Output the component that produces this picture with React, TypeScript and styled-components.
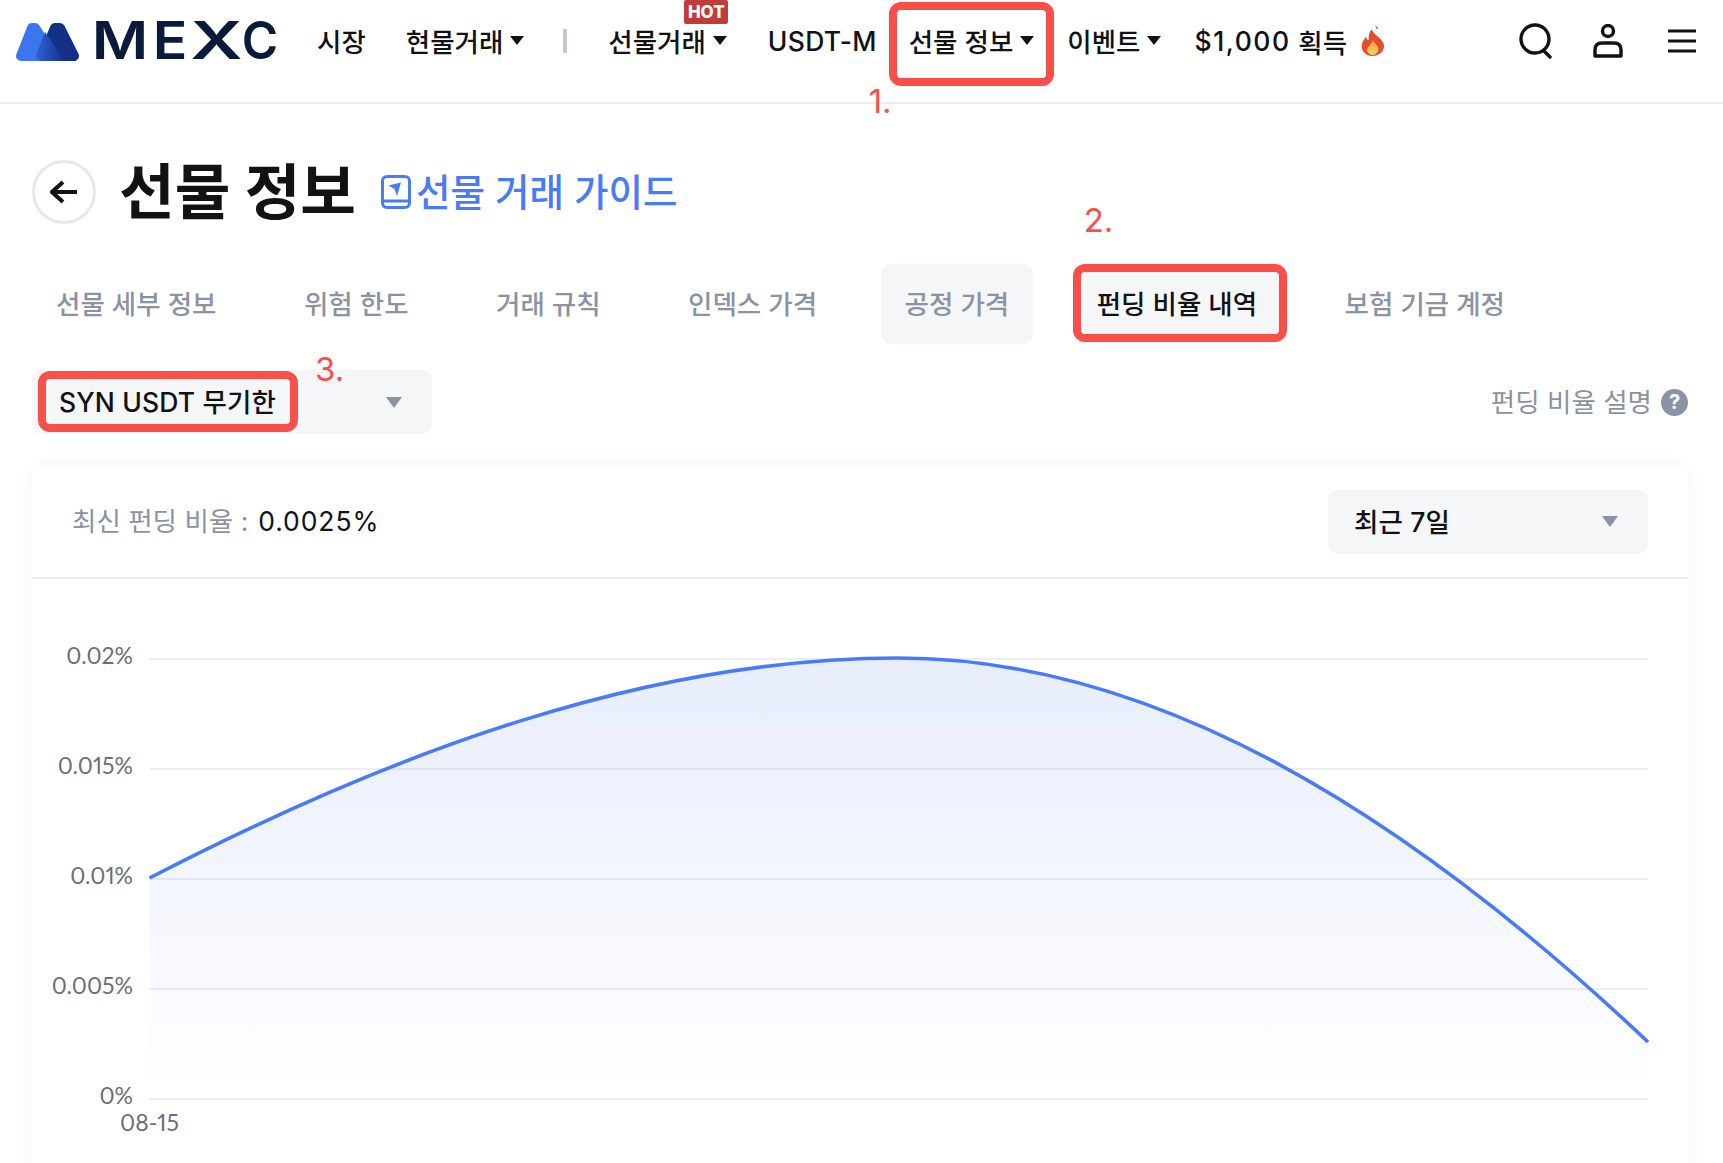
import styled, { createGlobalStyle } from 'styled-components';

const GlobalStyle = createGlobalStyle`
  html, body {
    margin: 0;
    padding: 0;
    background: #fff;
    overflow: hidden;
  }
  * { box-sizing: border-box; }
  body {
    font-family: Inter, "Noto Sans CJK KR", sans-serif;
    color: #111214;
  }
`;

const RED = '#f94f4b';
const BLUE = '#4a7bf7';
const GREY = '#8a92a3';

const Page = styled.div`
  width: 1723px;
  height: 1163px;
  overflow: hidden;
`;

const Header = styled.header`
  height: 104px;
  padding: 0 27px 20px 16px;
  border-bottom: 2px solid #ecedf1;
  display: flex;
  align-items: center;
`;

const Logo = styled.div`
  display: flex;
  align-items: center;
  width: 301px;
  gap: 18px;
`;

const Wordmark = styled.div`
  display: flex;
  font-size: 52px;
  line-height: 1;
  font-weight: 600;
  color: #0a1a3a;
`;

const Glyph = styled.span<{ $w: number; $ml: number; $sx: number }>`
  width: ${p => p.$w}px;
  margin-left: ${p => p.$ml}px;
  display: flex;
  justify-content: center;
  transform: scaleX(${p => p.$sx});
`;

const Nav = styled.nav`
  display: flex;
  align-items: center;
  height: 100%;
`;

const NavItem = styled.div<{ $ml: number }>`
  position: relative;
  display: flex;
  align-items: center;
  height: 100%;
  padding-bottom: 2px;
  margin-left: ${p => p.$ml}px;
  font-size: 26.5px;
  font-weight: 500;
  white-space: nowrap;
`;

const LatinItem = styled(NavItem)`
  padding-bottom: 0;
  letter-spacing: 0.3px;
`;

const Money = styled.span`
  letter-spacing: 1.6px;
`;

const Caret = styled.i`
  margin-left: 7px;
  width: 0;
  height: 0;
  border-left: 7px solid transparent;
  border-right: 7px solid transparent;
  border-top: 9px solid #111214;
`;

const Separator = styled.div`
  width: 4px;
  height: 24px;
  margin-left: 39px;
  background: #c2c7d3;
`;

const HotBadge = styled.span`
  position: absolute;
  top: 0;
  left: 76px;
  width: 44px;
  height: 24px;
  display: flex;
  align-items: center;
  justify-content: center;
  background: #c23a3a;
  border-radius: 2px;
  color: #fff;
  font-size: 17px;
  font-weight: 800;
`;

const Actions = styled.div`
  margin-left: auto;
  display: flex;
  align-items: center;
  gap: 40px;
`;

const Highlight = styled.div<{ $inset: string; $width?: number }>`
  position: absolute;
  inset: ${p => p.$inset};
  ${p => (p.$width ? `width: ${p.$width}px;` : '')}
  border: 8px solid ${RED};
  border-radius: 12px;
  pointer-events: none;
`;

const Step = styled.span<{ $left: number; $top: number }>`
  position: absolute;
  left: ${p => p.$left}px;
  top: ${p => p.$top}px;
  font-size: 33px;
  line-height: 1;
  font-weight: 400;
  color: ${RED};
`;

const Main = styled.main`
  padding: 56px 35px 0 32px;
`;

const TitleRow = styled.div`
  display: flex;
  align-items: center;
  height: 64px;
`;

const BackButton = styled.div`
  width: 64px;
  height: 64px;
  border: 3.5px solid #e8e8e8;
  border-radius: 50%;
  display: flex;
  align-items: center;
  justify-content: center;
`;

const Title = styled.h1`
  margin: 0 0 0 23px;
  font-size: 60.5px;
  line-height: 64px;
  font-weight: 700;
`;

const GuideLink = styled.a`
  margin-left: 25px;
  display: flex;
  align-items: center;
  gap: 5px;
  font-size: 37.5px;
  font-weight: 500;
  color: ${BLUE};
`;

const Lifted = styled.span<{ $by: number }>`
  padding-bottom: ${p => p.$by}px;
`;

const Tabs = styled.div`
  margin-top: 40px;
  display: flex;
  gap: 39.5px;
`;

const Tab = styled.div<{ $filled?: boolean; $active?: boolean }>`
  position: relative;
  height: 80px;
  padding: 0 24px 4px;
  display: flex;
  align-items: center;
  border-radius: 10px;
  font-size: 26.5px;
  font-weight: 500;
  white-space: nowrap;
  background: ${p => (p.$filled ? '#f5f6f8' : 'transparent')};
  color: ${p => (p.$active ? '#111214' : GREY)};
`;

const FilterRow = styled.div`
  margin-top: 26px;
  display: flex;
  align-items: center;
  justify-content: space-between;
`;

const Select = styled.div<{ $width: number; $pad: number }>`
  position: relative;
  width: ${p => p.$width}px;
  height: 64px;
  padding: 0 30px 3px ${p => p.$pad}px;
  display: flex;
  align-items: center;
  justify-content: space-between;
  background: #f5f6f8;
  border-radius: 10px;
  font-size: 26.5px;
  font-weight: 500;
  letter-spacing: 0.15px;
`;

const SelectCaret = styled.i`
  margin-top: 3px;
  width: 0;
  height: 0;
  border-left: 8px solid transparent;
  border-right: 8px solid transparent;
  border-top: 11px solid ${GREY};
`;

const Help = styled.div`
  display: flex;
  align-items: center;
  gap: 9px;
  font-size: 26.5px;
  font-weight: 400;
  color: ${GREY};
`;

const HelpIcon = styled.span`
  width: 27px;
  height: 27px;
  border-radius: 50%;
  background: ${GREY};
  color: #fff;
  font-size: 20px;
  font-weight: 700;
  display: flex;
  align-items: center;
  justify-content: center;
`;

const Card = styled.section`
  margin-top: 32px;
  height: 720px;
  background: #fff;
  border-radius: 10px;
  box-shadow: 0 0 18px rgba(0, 0, 0, 0.05);
`;

const CardHead = styled.div`
  height: 113px;
  padding: 0 40px 0 40px;
  border-bottom: 2px solid #ecedf1;
  display: flex;
  align-items: center;
  justify-content: space-between;
`;

const Latest = styled.div`
  padding-bottom: 4px;
  font-size: 26.5px;
  font-weight: 400;
  color: ${GREY};
`;

const LatestValue = styled.span`
  margin-left: 10px;
  font-weight: 400;
  letter-spacing: 0.9px;
  color: #111214;
`;

const Chart = styled.svg`
  display: block;
  width: 1656px;
  height: 584px;
`;

const AxisText = styled.text`
  font-family: Lato, sans-serif;
  font-size: 23px;
  font-variant-numeric: proportional-nums;
  fill: #6b6f76;
`;

const tabs = ['선물 세부 정보', '위험 한도', '거래 규칙', '인덱스 가격'];
const ticks = [
  { y: 659, label: '0.02%' },
  { y: 769, label: '0.015%' },
  { y: 879, label: '0.01%' },
  { y: 989, label: '0.005%' },
  { y: 1099, label: '0%' },
];

const CURVE = 'M149.5 878 C395 751 648 658 898 658 C1148 658 1397 804.5 1648 1042';

const LogoMark = () => (
  <svg width="63" height="39" viewBox="0 0 63 39">
    <defs>
      <linearGradient id="logoOverlap" x1="0" y1="0" x2="1" y2="0">
        <stop offset="0" stopColor="#2f62d6" />
        <stop offset="1" stopColor="#133087" />
      </linearGradient>
    </defs>
    <path d="M5 34 L16 6 L19 6 L37 34 Z" fill="#3a77ee" stroke="#3a77ee" strokeWidth="10" strokeLinejoin="round" />
    <path d="M27 34 L39 6 L44 6 L58 34 Z" fill="#133087" stroke="#133087" strokeWidth="10" strokeLinejoin="round" />
    <path d="M29 10 L20 33 Q20 39 26 39 L49 39 Z" fill="url(#logoOverlap)" />
  </svg>
);

const SearchIcon = () => (
  <svg width="34" height="36" viewBox="0 0 34 36" fill="none" stroke="#111214" strokeWidth="3.4">
    <circle cx="16" cy="16" r="14" />
    <path d="M25 28 L31 34" strokeLinecap="round" />
  </svg>
);

const UserIcon = () => (
  <svg width="32" height="34" viewBox="0 0 32 34" fill="none" stroke="#111214" strokeWidth="3.4">
    <circle cx="15" cy="7" r="5.5" />
    <path d="M2 32 V26 Q2 19 9 19 H21 Q28 19 28 26 V32 Z" strokeLinejoin="round" />
  </svg>
);

const MenuIcon = () => (
  <svg width="31" height="24" viewBox="-3 0 31 24" stroke="#111214" strokeWidth="3">
    <path d="M0 2 H28 M0 12 H28 M0 22 H28" />
  </svg>
);

const FlameIcon = () => (
  <svg width="24" height="31" viewBox="0 0 22 29">
    <defs>
      <linearGradient id="flameInner" x1="0" y1="0" x2="0" y2="1">
        <stop offset="0" stopColor="#f59a3c" />
        <stop offset="1" stopColor="#f8d568" />
      </linearGradient>
    </defs>
    <path d="M10 4 C11 8 15 10 18 13 C21 16 22 19 21 22 C20 26 15 29 11 29 C6 29 1 26 0.5 21 C0 16 3 14 4 11 C5 13 6 14 7 14 C7 10 7 7 10 4 Z" fill="#e0502e" />
    <path d="M11 14 C12 17 16 19 16 23 C16 26 13 28 11 28 C8 28 5 26 5.5 23 C6 20 10 18 11 14 Z" fill="url(#flameInner)" />
    <path d="M13 0 L16 3 L14.5 4 Z" fill="#e0502e" />
  </svg>
);

const BackIcon = () => (
  <svg width="28" height="24" viewBox="0 0 28 24" fill="none" stroke="#111214" strokeWidth="4">
    <path d="M13 2 L2 12 L13 22 M2 12 H27" />
  </svg>
);

const GuideIcon = () => (
  <svg width="30" height="34" viewBox="0 0 30 34" fill="none" stroke={BLUE} strokeWidth="3">
    <rect x="1.5" y="1.5" width="27" height="31" rx="4.5" />
    <path d="M1.5 26 H28.5" />
    <path d="M7.5 10.5 L20 7.5 L16 21 L13.5 14 Z" fill={BLUE} stroke="none" />
  </svg>
);

const FundingChart = () => (
  <Chart viewBox="32 579 1656 584">
    <defs>
      <linearGradient id="areaFill" x1="0" y1="658" x2="0" y2="1099" gradientUnits="userSpaceOnUse">
        <stop offset="0" stopColor="#e7edfc" />
        <stop offset="1" stopColor="#ffffff" />
      </linearGradient>
    </defs>
    <path d={`${CURVE} V1099 H149.5 Z`} fill="url(#areaFill)" />
    {ticks.map(t => (
      <g key={t.label}>
        <line x1="149.5" x2="1648" y1={t.y} y2={t.y} stroke="#5b7fa8" strokeOpacity="0.12" strokeWidth="2" />
        <AxisText x="133" y={t.y - 1} textAnchor="end" dominantBaseline="middle">{t.label}</AxisText>
      </g>
    ))}
    <path d={CURVE} fill="none" stroke={BLUE} strokeWidth="3.6" />
    <AxisText x="149.5" y="1125" textAnchor="middle" dominantBaseline="middle">08-15</AxisText>
  </Chart>
);

export default function App() {
  return (
    <Page>
      <GlobalStyle />
      <Header>
        <Logo>
          <LogoMark />
          <Wordmark>
            <Glyph $w={46} $ml={0} $sx={1.18}>M</Glyph>
            <Glyph $w={26} $ml={14} $sx={1.1}>E</Glyph>
            <Glyph $w={47} $ml={10} $sx={1.4}>X</Glyph>
            <Glyph $w={34} $ml={3} $sx={0.95}>C</Glyph>
          </Wordmark>
        </Logo>
        <Nav>
          <NavItem $ml={0}>시장</NavItem>
          <NavItem $ml={40}>현물거래<Caret /></NavItem>
          <Separator />
          <NavItem $ml={41}>
            선물거래<Caret />
            <HotBadge>HOT</HotBadge>
          </NavItem>
          <LatinItem $ml={41}>USDT-M</LatinItem>
          <NavItem $ml={32}>
            선물 정보<Caret />
            <Highlight $inset="2px -20px -4px -20px" />
            <Step $left={-40} $top={85}>1.</Step>
          </NavItem>
          <NavItem $ml={33}>이벤트<Caret /></NavItem>
          <LatinItem $ml={33}><Money>$1,000</Money>&nbsp;획득</LatinItem>
          <NavItem $ml={13}><FlameIcon /></NavItem>
        </Nav>
        <Actions>
          <SearchIcon />
          <UserIcon />
          <MenuIcon />
        </Actions>
      </Header>
      <Main>
        <TitleRow>
          <BackButton><BackIcon /></BackButton>
          <Title>선물 정보</Title>
          <GuideLink><GuideIcon /><Lifted $by={5}>선물 거래 가이드</Lifted></GuideLink>
        </TitleRow>
        <Tabs>
          {tabs.map(t => <Tab key={t}>{t}</Tab>)}
          <Tab $filled>공정 가격</Tab>
          <Tab $filled $active>
            펀딩 비율 내역
            <Highlight $inset="0 -6px 2px 0" />
            <Step $left={11} $top={-60}>2.</Step>
          </Tab>
          <Tab>보험 기금 계정</Tab>
        </Tabs>
        <FilterRow>
          <Select $width={400} $pad={27}>
            SYN USDT 무기한
            <SelectCaret />
            <Highlight $inset="1px auto 2px 6px" $width={260} />
            <Step $left={283} $top={-17}>3.</Step>
          </Select>
          <Help><Lifted $by={3}>펀딩 비율 설명</Lifted><HelpIcon>?</HelpIcon></Help>
        </FilterRow>
        <Card>
          <CardHead>
            <Latest>최신 펀딩 비율 :<LatestValue>0.0025%</LatestValue></Latest>
            <Select $width={320} $pad={26}>
              최근 7일
              <SelectCaret />
            </Select>
          </CardHead>
          <FundingChart />
        </Card>
      </Main>
    </Page>
  );
}
